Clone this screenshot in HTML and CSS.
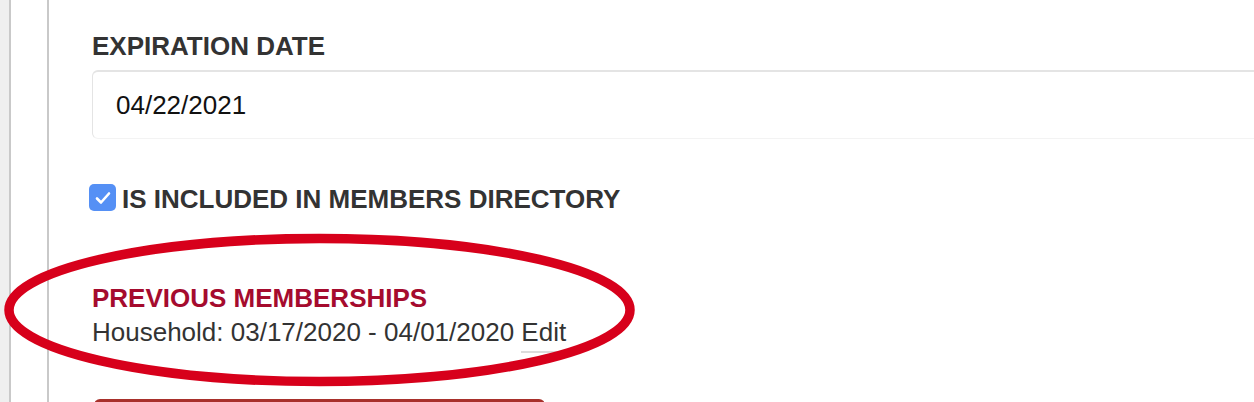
FILE: index.html
```html
<!DOCTYPE html>
<html lang="en">
<head>
    <meta charset="UTF-8">
    <meta name="viewport" content="width=device-width, initial-scale=1.0">
    <title>Membership</title>
    <link rel="stylesheet" href="styles.css">
</head>
<body>
    <div class="page">
        <div class="gutter"></div>
        <div class="rail"></div>
        <div class="content">
            <div class="form-group">
                <label for="expiration-date">Expiration Date</label>
                <input type="text" id="expiration-date" value="04/22/2021">
            </div>

            <div class="check-row">
                <span class="checkbox">
                    <svg viewBox="0 0 26 26" width="26" height="26">
                        <path d="M7 13.5 L11 17.5 L19 8.5" fill="none" stroke="#fff" stroke-width="2.6" stroke-linecap="round" stroke-linejoin="round"/>
                    </svg>
                </span>
                <span class="check-label">Is Included in Members Directory</span>
            </div>

            <div class="previous">
                <h3>Previous Memberships</h3>
                <p>Household: 03/17/2020 - 04/01/2020 <a href="#" class="edit-link">Edit</a></p>
            </div>

            <button class="save-btn" aria-label="Save membership"></button>
        </div>
    </div>

    <!-- highlight ring around the previous memberships block -->
    <svg class="highlight" viewBox="0 0 1254 402" width="1254" height="402">
        <ellipse cx="319.5" cy="310" rx="310.5" ry="71.5" fill="none" stroke="#d7001b" stroke-width="9.5"/>
    </svg>
</body>
</html>
```

FILE: styles.css
```css
* {
    margin: 0;
    padding: 0;
    box-sizing: border-box;
    font-family: "Liberation Sans", Arial, Helvetica, sans-serif;
}

body {
    background-color: #fff;
    overflow: hidden;
    height: 402px;
}

.page {
    display: flex;
    height: 402px;
}

.gutter {
    width: 11px;
    background-color: #efefef;
    border-right: 2px solid #c9c9c9;
    flex-shrink: 0;
}

.rail {
    width: 38px;
    border-right: 2px solid #c9c9c9;
    flex-shrink: 0;
}

.content {
    flex: 1;
    padding: 31px 0 0 43px;
    min-width: 0;
}

.form-group label {
    display: block;
    font-size: 26px;
    line-height: 30px;
    font-weight: 700;
    text-transform: uppercase;
    color: #333;
    margin-bottom: 9px;
}

.form-group input {
    display: block;
    width: calc(100% + 20px);
    height: 69px;
    padding: 0 23px;
    font-size: 26px;
    color: #111;
    border: 1px solid #e4e4e4;
    border-top-width: 2px;
    border-bottom-color: #f3f3f3;
    border-radius: 6px;
    outline: none;
}

.check-row {
    display: flex;
    align-items: center;
    margin-top: 45px;
    margin-left: -3px;
}

.checkbox {
    display: inline-flex;
    width: 27px;
    height: 27px;
    border-radius: 5px;
    background-color: #5590f5;
    margin-right: 6px;
    margin-top: -3px;
    align-items: center;
    justify-content: center;
}

.check-label {
    font-size: 26px;
    line-height: 30px;
    font-weight: 700;
    text-transform: uppercase;
    color: #333;
}

.previous {
    margin-top: 69px;
}

.previous h3 {
    font-size: 26px;
    line-height: 30px;
    font-weight: 700;
    text-transform: uppercase;
    color: #a50b2e;
}

.previous p {
    margin-top: 4px;
    font-size: 26px;
    line-height: 30px;
    color: #333;
}

.edit-link {
    color: #333;
    text-decoration: none;
    border-bottom: 2px solid #dcdcdc;
    padding-bottom: 4px;
}

.save-btn {
    display: block;
    margin-top: 52px;
    margin-left: 2px;
    width: 451px;
    height: 56px;
    border: none;
    border-radius: 6px;
    background-color: #a8302b;
}

.highlight {
    position: absolute;
    top: 0;
    left: 0;
    pointer-events: none;
}
```
